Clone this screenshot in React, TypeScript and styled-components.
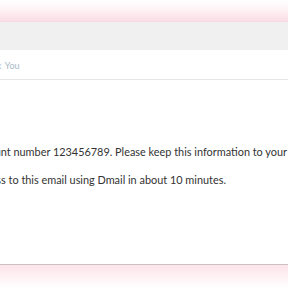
import React from "react";
import styled, { createGlobalStyle } from "styled-components";

const Global = createGlobalStyle`
  html, body { margin: 0; padding: 0; background: #ffffff; }
  body { font-family: Lato, "Open Sans", sans-serif; }
`;

const Page = styled.div`
  width: 288px;
  height: 288px;
  overflow: hidden;
  display: flex;
  flex-direction: column;
  background: #ffffff;
`;

const TopGlow = styled.div`
  height: 22px;
  flex-shrink: 0;
  background: linear-gradient(to bottom, #ffffff 0%, #fdf0f3 50%, #fbdbe4 100%);
`;

const Card = styled.div`
  display: flex;
  flex-direction: column;
  height: 242px;
  flex-shrink: 0;
  background: #ffffff;
  border-bottom: 1px solid #cdbfc5;
  box-shadow: 0 1px 2px rgba(150, 110, 125, 0.35);
  overflow: hidden;
`;

const HeaderBar = styled.div`
  height: 28px;
  background: #f0f0f0;
`;

const SubjectRow = styled.div`
  height: 28px;
  border-bottom: 1px solid #e6e6e6;
  display: flex;
  align-items: center;
  padding-top: 1px;
`;

const Subject = styled.span`
  font-size: 9px;
  color: #a9b8c6;
  white-space: nowrap;
  word-spacing: 1.5px;
  margin-left: -23px;
`;

const Body = styled.div`
  padding-top: 66px;
  display: flex;
  flex-direction: column;
  gap: 16px;
`;

const Line = styled.div<{ $end: number }>`
  display: flex;
  justify-content: flex-end;
  width: ${(p) => p.$end}px;
`;

const Para = styled.p`
  margin: 0;
  flex-shrink: 0;
  font-size: 10.9px;
  line-height: 12px;
  color: #333333;
  white-space: nowrap;
`;

const BottomGlow = styled.div`
  flex: 1;
  background: linear-gradient(to bottom, #fbe3ea 0%, #fdf1f4 50%, #ffffff 100%);
`;

export default function App() {
  return (
    <>
      <Global />
      <Page>
        <TopGlow />
        <Card>
          <HeaderBar />
          <SubjectRow>
            <Subject>Thank You</Subject>
          </SubjectRow>
          <Body>
            <Line $end={287}>
              <Para>Your account number 123456789. Please keep this information to your</Para>
            </Line>
            <Line $end={226}>
              <Para>You will have access to this email using Dmail in about 10 minutes.</Para>
            </Line>
          </Body>
        </Card>
        <BottomGlow />
      </Page>
    </>
  );
}
